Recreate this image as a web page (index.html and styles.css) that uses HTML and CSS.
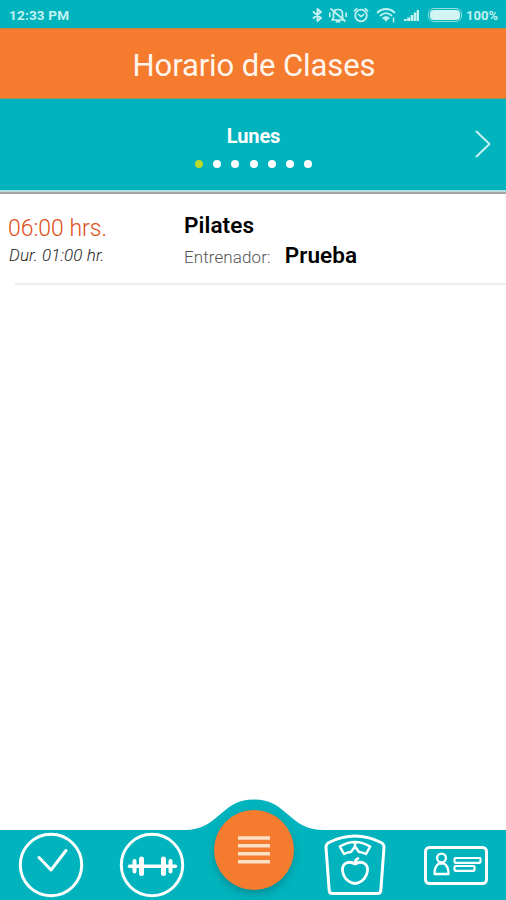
FILE: index.html
```html
<!DOCTYPE html>
<html lang="es">
<head>
    <meta charset="UTF-8">
    <meta name="viewport" content="width=device-width, initial-scale=1.0">
    <title>Horario de Clases</title>
    <link rel="stylesheet" href="styles.css">
</head>
<body>
    <div class="status-bar">
        <span class="clock">12:33 PM</span>
        <div class="status-icons">
            <svg width="11" height="14" viewBox="0 0 11 14">
                <path d="M1.500 4l7.500 6-3.500 3V1L9 4l-7.500 6" stroke-width="1.900"/>
            </svg>
            <svg class="bell" width="20" height="16" viewBox="0 0 20 16">
                <path d="M5.500 11V7c0-2.800 2-4.500 4.500-4.500s4.500 1.700 4.500 4.500v4l1.500 2H4zM8.500 14.700h3M17 14L3 2M1.800 6v3.500M18.200 6v3.500" stroke-width="1.700"/>
            </svg>
            <svg class="alarm" width="16" height="16" viewBox="0 0 16 16">
                <circle cx="8" cy="8.500" r="5.800"/>
                <path d="M1.300 3.800l2.500-2.300M14.700 3.800l-2.500-2.300M5.500 7.500L8 9.700l2.700-2.200" stroke-width="1.600"/>
            </svg>
            <svg class="wifi" width="21" height="16" viewBox="0 0 21 16">
                <path d="M1.500 5.500c5-4.700 12-4.700 17 0M4.500 8.500c3.500-3 7.500-3 11 0M7.200 11.200c2-1.500 3.700-1.500 5.600 0"/>
                <path class="solid" d="M7.500 11.800q2.500-1.700 5 0L10 14.800z"/>
                <path d="M17.500 11v4" stroke-width="1.500"/>
            </svg>
            <svg class="signal" width="17" height="14" viewBox="0 0 17 14">
                <path class="solid" d="M1 13v-2h2.700v2zM4.200 13V9.500H7V13zM7.500 13V7h2.800v6zM10.800 13V4.500h2.500V13zM13.700 13V2H16V13z"/>
            </svg>
            <span class="battery"><span class="battery-level"></span></span>
            <span class="battery-text">100%</span>
        </div>
    </div>

    <header class="title-bar">
        <h1>Horario de Clases</h1>
    </header>

    <section class="day-picker">
        <div class="day">
            <h2>Lunes</h2>
            <div class="dots">
                <span class="dot active"></span>
                <span class="dot"></span>
                <span class="dot"></span>
                <span class="dot"></span>
                <span class="dot"></span>
                <span class="dot"></span>
                <span class="dot"></span>
            </div>
        </div>
        <svg class="next" width="18" height="30" viewBox="0 0 18 30">
            <path d="M1.500 2.500L14.500 15l-13 12.500"/>
        </svg>
    </section>

    <main class="class-list">
        <div class="class-row">
            <div class="class-time">
                <div class="hour">06:00 hrs.</div>
                <div class="duration">Dur. 01:00 hr.</div>
            </div>
            <div class="class-info">
                <div class="class-name">Pilates</div>
                <div class="trainer">
                    <span class="trainer-label">Entrenador:</span>
                    <span class="trainer-name">Prueba</span>
                </div>
            </div>
        </div>
    </main>

    <nav class="bottom-nav">
        <svg class="nav-hump" width="150" height="33" viewBox="0 0 150 33">
            <path d="M0 33V31H7C43 31 43 .5 77 .5S111 31 147 31H150V33z"/>
        </svg>
        <svg class="nav-icon" width="66" height="66" viewBox="0 0 66 66">
            <circle cx="33" cy="33" r="30.700"/>
            <path d="M21 25.500l12 12.500L48 18.500"/>
        </svg>
        <svg class="nav-icon" width="66" height="66" viewBox="0 0 66 66">
            <circle cx="33" cy="33" r="30.700"/>
            <path d="M10.500 34.200h46" stroke-width="3.500"/>
            <path d="M15.500 29v10.500M51.500 29v10.500" stroke-width="4"/>
            <path d="M22.500 27v14.500M44.500 27v14.500" stroke-width="5"/>
        </svg>
        <button class="menu-btn">
            <svg width="34" height="30" viewBox="0 0 34 30">
                <path d="M1 3h32M1 10.800h32M1 18.800h32M1 26.800h32"/>
            </svg>
        </button>
        <svg class="nav-icon scale" width="62" height="62" viewBox="0 0 62 62">
            <path d="M8.500 59.500q-3 0-3.300-3L2 13.500q-.2-3.500 3-5Q31-4.500 57 8.500q3.200 1.500 3 5l-3.200 43q-.3 3-3.300 3z"/>
            <path d="M15.800 12.500Q31 3.500 46.200 12.500L42 20Q38.500 18.200 35 18L31 12.500 27 18Q23.500 18.200 20 20zM31 8v4.500" stroke-width="2.500"/>
            <path d="M31 30c-6-3.800-13-1-12.500 6.500.4 6.500 5 11 9.500 12.300 1.500.5 4.500.5 6 0 4.500-1.300 9.100-5.800 9.500-12.300.5-7.500-6.500-10.300-12.500-6.500zM31 29.500q-.3-3.500 3-5" stroke-width="2.800"/>
        </svg>
        <svg class="nav-icon card" width="64" height="40" viewBox="0 0 64 40">
            <rect x="1.500" y="1.500" width="61" height="36" rx="4"/>
            <circle cx="17.500" cy="12" r="4.400" stroke-width="2.300"/>
            <path d="M10.500 28q0-8 4.500-10.500h5q4.500 2.500 4.500 10.500z" stroke-width="2.300"/>
            <rect x="30.500" y="12" width="26" height="4.800" rx="1" stroke-width="2.200"/>
            <rect x="30.500" y="20" width="20" height="4.800" rx="1" stroke-width="2.200"/>
        </svg>
    </nav>
</body>
</html>
```

FILE: styles.css
```css
* {
    box-sizing: border-box;
}
body {
    margin: 0;
    height: 900px;
    display: flex;
    flex-direction: column;
    background: #fff;
    font-family: Roboto, sans-serif;
    overflow: hidden;
}
h1, h2 {
    margin: 0;
}
svg {
    display: block;
    flex-shrink: 0;
    fill: none;
    stroke: #fff;
    stroke-linecap: round;
    stroke-linejoin: round;
}

/* Status bar */
.status-bar {
    height: 28px;
    display: flex;
    align-items: center;
    justify-content: space-between;
    padding: 2px 8px 0 9px;
    background: #00b3bc;
    color: #c4f2f2;
    font-size: 13px;
    font-weight: 700;
}
.clock {
    font-size: 13.5px;
    letter-spacing: 0.2px;
}
.status-icons {
    display: flex;
    align-items: center;
}
.status-icons svg {
    stroke: #c4f2f2;
    stroke-width: 1.8;
}
.status-icons .solid {
    fill: #c4f2f2;
    stroke: none;
}
.bell {
    margin-left: 5px;
}
.alarm {
    margin-left: 5px;
}
.wifi {
    margin-left: 7px;
}
.signal {
    margin-left: 6px;
}
.battery {
    width: 34px;
    height: 14px;
    margin-left: 8px;
    padding: 1px;
    border: 1px solid #8ce0e2;
    border-radius: 6px;
}
.battery-level {
    display: block;
    height: 100%;
    border-radius: 4px;
    background: #d2f5f4;
}
.battery-text {
    width: 32px;
    margin-left: 4px;
}

/* Title */
.title-bar {
    height: 71px;
    display: flex;
    align-items: center;
    justify-content: center;
    padding: 4px 0 0 2px;
    background: #f57b2f;
    border-top: 1px solid #c08a43;
    border-bottom: 1px solid #a29457;
}
.title-bar h1 {
    color: #fff5ec;
    font-size: 31px;
    font-weight: 400;
    letter-spacing: -0.1px;
}

/* Day selector */
.day-picker {
    height: 95px;
    display: grid;
    grid-template-columns: 31px 1fr 31px;
    background: #00b3bc;
    border-bottom: 2px solid #a3a5a8;
    box-shadow: inset 0 -2px #b3dfe1;
}
.day {
    grid-column: 2;
    display: flex;
    flex-direction: column;
    align-items: center;
    padding: 25px 0 0 1px;
}
.day h2 {
    color: #fff;
    font-size: 20px;
    line-height: 24px;
    font-weight: 700;
    letter-spacing: -0.1px;
}
.dots {
    display: flex;
    gap: 10.3px;
    margin-top: 12px;
}
.dot {
    width: 8px;
    height: 8px;
    border-radius: 50%;
    background: #fff;
}
.dot.active {
    background: #b9db2c;
}
.next {
    margin-top: 30px;
    stroke: #c4f2f2;
    stroke-width: 2;
}

/* Class list */
.class-list {
    flex: 1;
}
.class-row {
    height: 91px;
    display: grid;
    grid-template-columns: 176px 1fr;
    padding: 18px 0 0 8px;
    background: linear-gradient(#eee, #eee) 15px 100% / 100% 2px no-repeat;
}
.hour {
    margin-top: 3px;
    color: #de4f18;
    font-size: 23px;
    line-height: 27px;
    font-weight: 300;
}
.duration {
    margin: 3px 0 0 1px;
    color: #222;
    font-size: 17px;
    line-height: 20px;
    font-style: italic;
    font-weight: 300;
    letter-spacing: 0.1px;
}
.class-name,
.trainer-name {
    color: #000;
    font-size: 22.5px;
    line-height: 27px;
    font-weight: 600;
    letter-spacing: 0.1px;
}
.trainer {
    display: flex;
    align-items: baseline;
    gap: 14px;
    margin-top: 3px;
}
.trainer-label {
    color: #555;
    font-size: 17px;
    font-weight: 300;
    letter-spacing: 0.1px;
}

/* Bottom navigation */
.bottom-nav {
    position: relative;
    height: 70px;
    display: flex;
    align-items: flex-start;
    padding: 2px 18px 0;
    background: #00b3bc;
}
.nav-hump {
    position: absolute;
    left: 177px;
    top: -31px;
    fill: #00b3bc;
    stroke: none;
}
.nav-icon {
    margin-right: 35px;
    stroke-width: 3;
}
.menu-btn {
    position: relative;
    width: 80px;
    height: 80px;
    flex-shrink: 0;
    display: flex;
    align-items: center;
    justify-content: center;
    margin: -22px 30px 0 -6px;
    padding: 0;
    border: none;
    border-radius: 50%;
    background: #f57b2f;
    box-shadow: 0 4px 7px rgba(0, 80, 90, 0.35);
}
.menu-btn svg {
    stroke: #ffe0c6;
    stroke-width: 3.5;
    stroke-linecap: butt;
}
.scale {
    margin: 2px 38px 0 0;
}
.card {
    margin: 14px 0 0;
}
```
